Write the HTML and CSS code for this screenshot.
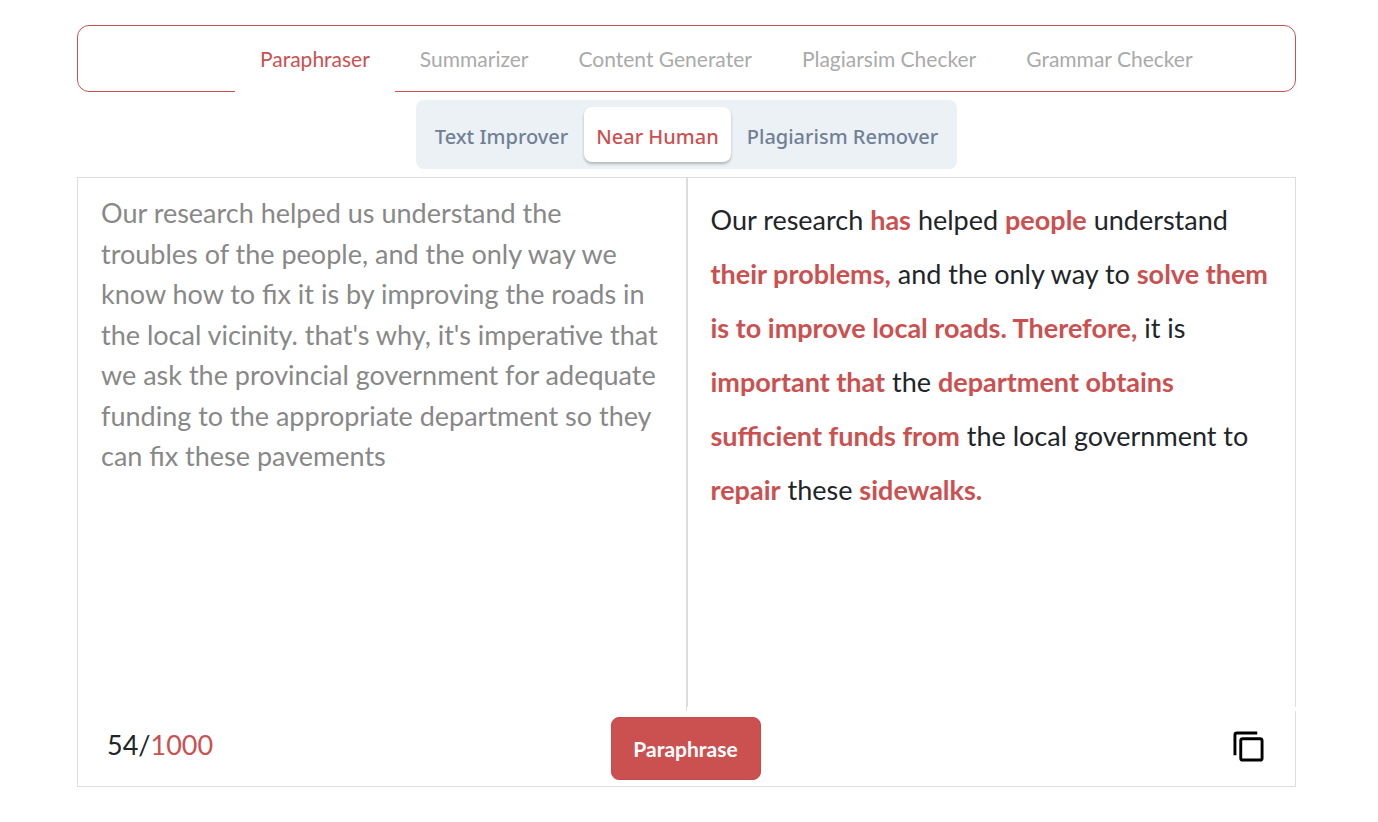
FILE: index.html
```html
<!DOCTYPE html>
<html lang="en">
<head>
    <meta charset="UTF-8">
    <meta name="viewport" content="width=device-width, initial-scale=1.0">
    <title>Paraphraser</title>
    <link rel="stylesheet" href="styles.css">
</head>
<body>
    <main class="container">
        <nav class="tool-tabs">
            <a class="tab active" href="#paraphraser">Paraphraser</a>
            <a class="tab" href="#summarizer">Summarizer</a>
            <a class="tab" href="#content">Content Generater</a>
            <a class="tab" href="#plagiarism">Plagiarsim Checker</a>
            <a class="tab" href="#grammar">Grammar Checker</a>
        </nav>

        <div class="modes">
            <button type="button" class="mode">Text Improver</button>
            <button type="button" class="mode active">Near Human</button>
            <button type="button" class="mode">Plagiarism Remover</button>
        </div>

        <form class="editor">
            <div class="panes">
                <textarea class="source" aria-label="Your text" spellcheck="false">Our research helped us understand the troubles of the people, and the only way we know how to fix it is by improving the roads in the local vicinity. that's why, it's imperative that we ask the provincial government for adequate funding to the appropriate department so they can fix these pavements</textarea>
                <div class="result">Our research <b>has</b> helped <b>people</b> understand <b>their problems,</b> and the only way to <b>solve them is to improve local roads. Therefore,</b> it is <b>important that</b> the <b>department obtains sufficient funds from</b> the local government to <b>repair</b> these <b>sidewalks.</b></div>
            </div>
            <div class="actions">
                <p class="count">54/<span class="limit">1000</span></p>
                <button type="button" class="submit">Paraphrase</button>
                <button type="button" class="copy" aria-label="Copy">
                    <svg width="31" height="31" viewBox="0 0 32 32" fill="none" stroke="#000" stroke-width="3">
                        <path d="M2 25V4a2 2 0 0 1 2-2h21" />
                        <rect x="8" y="8" width="22" height="22" rx="2" />
                    </svg>
                </button>
            </div>
        </form>
    </main>
</body>
</html>
```
FILE: styles.css
```css
* {
    box-sizing: border-box;
}

body {
    font-family: Lato, sans-serif;
    margin: 0;
    background-color: #fff;
    color: #212529;
}

.container {
    padding: 25px 82px 35px 77px;
}

.tool-tabs {
    display: flex;
    height: 67px;
    padding-left: 157px;
    border: 1px solid #cb5151;
    border-radius: 12px;
}

.tab {
    height: 66px;
    padding: 0 25px;
    font-size: 21px;
    line-height: 66px;
    color: #aaa;
    text-decoration: none;
    white-space: nowrap;
}

/* covers the bottom border under the open tab */
.tab.active {
    color: #cb5151;
    background-color: #fff;
}

.modes {
    display: flex;
    gap: 4px;
    width: fit-content;
    margin: 8px auto;
    padding: 7px;
    border-radius: 8px;
    background-color: #ebf1f5;
}

.mode {
    height: 55px;
    padding: 4px 12px 0;
    border: none;
    border-radius: 8px;
    background: none;
    font-family: "Noto Sans", sans-serif;
    font-size: 20px;
    font-weight: 500;
    color: #718096;
    cursor: pointer;
}

.mode.active {
    background-color: #fff;
    color: #cb5151;
    box-shadow: 0 2px 3px rgba(0, 0, 0, 0.25);
}

.panes {
    display: grid;
    grid-template-columns: 1fr 1fr;
    align-items: start;
}

.source {
    height: 534px;
    padding: 15px 23px;
    border: 1px solid #ddd;
    border-bottom: none;
    border-radius: 0;
    outline: none;
    resize: none;
    font-family: inherit;
    font-size: 27px;
    line-height: 1.5;
    color: #888;
}

.result {
    height: 530px;
    padding: 15px 23px;
    border: 1px solid #ddd;
    border-bottom: none;
    font-size: 27px;
    line-height: 2;
}

.result b {
    color: #cb5151;
}

.actions {
    display: grid;
    grid-template-columns: 1fr auto 1fr;
    align-items: center;
    padding: 6px 31px 6px 29px;
    border: 1px solid #ddd;
    border-top: none;
}

.count {
    margin: 0;
    padding-bottom: 8px;
    font-size: 27px;
}

.limit {
    color: #cb5151;
}

.submit {
    width: 150px;
    height: 63px;
    padding: 0;
    border: 1px solid #c94a4a;
    border-radius: 8px;
    background-color: #cb5151;
    font-family: inherit;
    font-size: 21px;
    font-weight: bold;
    color: #fff;
    cursor: pointer;
}

.copy {
    justify-self: end;
    display: flex;
    padding: 0 0 4px;
    border: none;
    background: none;
    cursor: pointer;
}
```
